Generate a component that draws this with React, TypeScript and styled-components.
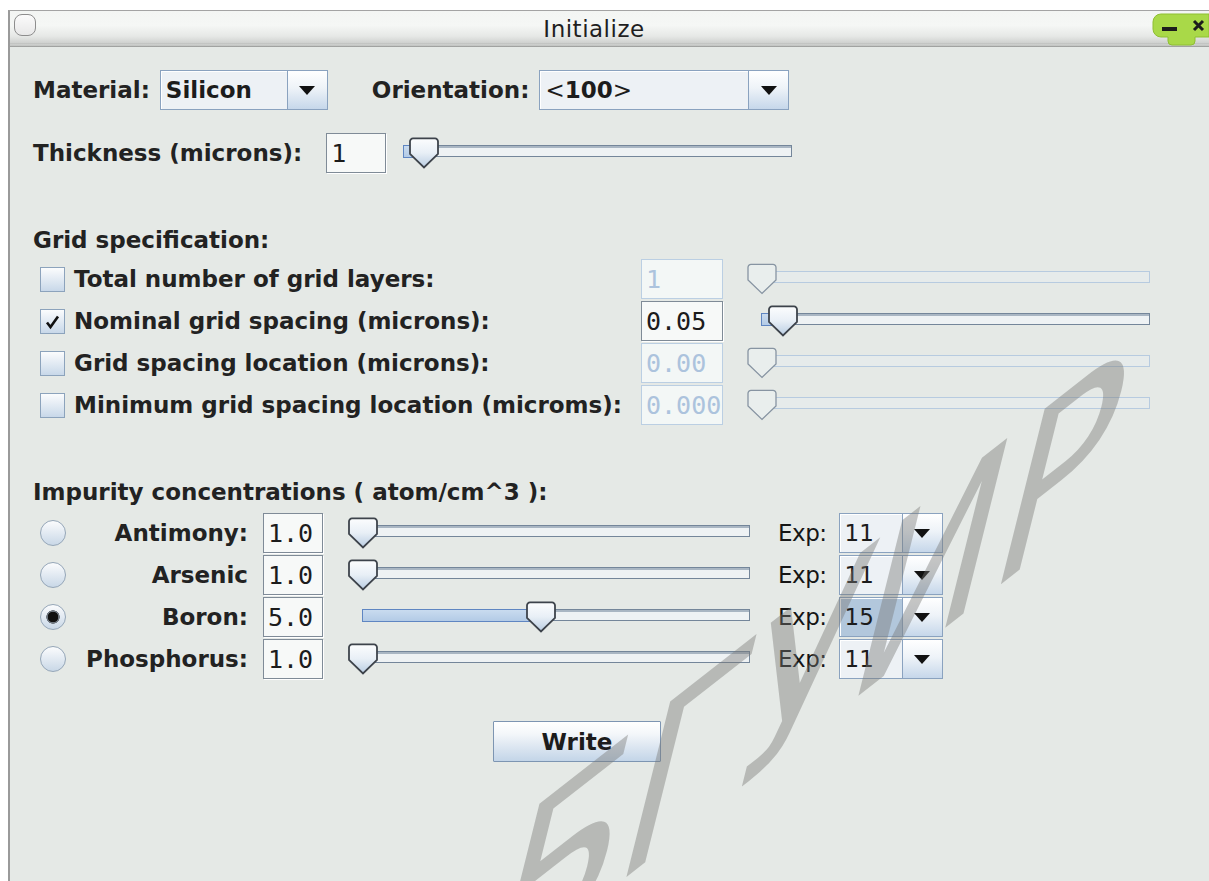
import styled, { createGlobalStyle } from "styled-components";

const GlobalStyle = createGlobalStyle`
  html, body {
    margin: 0;
    padding: 0;
    background: #ffffff;
  }
  body {
    font-family: "DejaVu Sans", "Liberation Sans", sans-serif;
  }
  * {
    box-sizing: border-box;
  }
`;

type Impurity = {
  name: string;
  value: string;
  pos: number;
  exp: string;
  selected?: boolean;
};

const gridRows = [
  { label: "Total number of grid layers:", value: "1", checked: false, pos: 0 },
  { label: "Nominal grid spacing (microns):", value: "0.05", checked: true, pos: 0.054 },
  { label: "Grid spacing location (microns):", value: "0.00", checked: false, pos: 0 },
  { label: "Minimum grid spacing location (microms):", value: "0.000", checked: false, pos: 0 },
];

const impurities: Impurity[] = [
  { name: "Antimony:", value: "1.0", pos: 0, exp: "11" },
  { name: "Arsenic", value: "1.0", pos: 0, exp: "11" },
  { name: "Boron:", value: "5.0", pos: 0.46, exp: "15", selected: true },
  { name: "Phosphorus:", value: "1.0", pos: 0, exp: "11" },
];

const DownArrow = () => (
  <svg width="16" height="9" viewBox="0 0 16 9">
    <path d="M0 0H16L8 9Z" fill="#111" />
  </svg>
);

const ThumbShape = ({ disabled }: { disabled?: boolean }) => (
  <svg width="31" height="32" viewBox="0 0 31 32">
    <defs>
      <linearGradient id="thumbFill" x1="0" y1="0" x2="0" y2="1">
        <stop offset="0" stopColor="#fcfdfe" />
        <stop offset="0.5" stopColor="#e8eff6" />
        <stop offset="1" stopColor="#b9cde2" />
      </linearGradient>
    </defs>
    <path
      d="M4.5 1.5H26.5A3 3 0 0 1 29.5 4.5V17L15.5 30.5L1.5 17V4.5A3 3 0 0 1 4.5 1.5Z"
      fill={disabled ? "#e9eeed" : "url(#thumbFill)"}
      stroke={disabled ? "#8794a2" : "#3d434b"}
      strokeWidth={disabled ? 1.3 : 1.8}
    />
  </svg>
);

const Slider = ({
  width,
  gap,
  pos,
  disabled,
}: {
  width: number;
  gap: number;
  pos: number;
  disabled?: boolean;
}) => (
  <SliderBox $width={width} $gap={gap}>
    <Track $disabled={disabled}>
      {!disabled && pos > 0 && <TrackFill style={{ width: `${pos * 100}%` }} />}
      <Thumb style={{ left: `${pos * 100}%` }}>
        <ThumbShape disabled={disabled} />
      </Thumb>
    </Track>
  </SliderBox>
);

const Combo = ({
  value,
  width,
  bold,
  selected,
}: {
  value: React.ReactNode;
  width: number;
  bold?: boolean;
  selected?: boolean;
}) => (
  <ComboBox $width={width}>
    <ComboValue $bold={bold} $selected={selected}>
      {value}
    </ComboValue>
    <ComboArrow>
      <DownArrow />
    </ComboArrow>
  </ComboBox>
);

const CheckBox = ({ checked }: { checked?: boolean }) => (
  <CheckSquare>
    {checked && (
      <svg width="23" height="23" viewBox="0 0 23 23">
        <path d="M6 12.5L9.5 17L17 6.5" fill="none" stroke="#111" strokeWidth="2.6" />
      </svg>
    )}
  </CheckSquare>
);

const WindowControls = () => (
  <svg width="57" height="34" viewBox="0 0 57 34">
    <path
      d="M9 2H57V25H43V29A4 4 0 0 1 39 33H20A4 4 0 0 1 16 29V25H9A8 8 0 0 1 1 17V10A8 8 0 0 1 9 2Z"
      fill="#a9d948"
      stroke="#8fbf33"
      strokeWidth="1"
    />
    <rect x="10" y="15" width="15" height="4" fill="#1c1c1c" />
    <path d="M42 9L51 18M51 9L42 18" stroke="#1c1c1c" strokeWidth="3" />
  </svg>
);

export default function App() {
  return (
    <>
      <GlobalStyle />
      <Window>
        <TitleBar>
          <CloseDot />
          <Title>Initialize</Title>
          <Controls>
            <WindowControls />
          </Controls>
        </TitleBar>

        <Content>
          <Row>
            <Label>Material:</Label>
            <Spacer $w={10} />
            <Combo value="Silicon" width={168} bold />
            <Spacer $w={44} />
            <Label>Orientation:</Label>
            <Spacer $w={10} />
            <Combo
              value={
                <>
                  <Thin>&lt;</Thin>100<Thin>&gt;</Thin>
                </>
              }
              width={250}
              bold
            />
          </Row>

          <Row $mt={23}>
            <Label>Thickness (microns):</Label>
            <Spacer $w={24} />
            <TextField $width={60}>1</TextField>
            <Slider width={389} gap={17} pos={0.05} />
          </Row>

          <SectionTitle $mt={52}>Grid specification:</SectionTitle>
          <RowList $mt={4}>
            {gridRows.map((r) => (
              <Row key={r.label}>
                <CheckBox checked={r.checked} />
                <OptionLabel>{r.label}</OptionLabel>
                <TextField $width={82} $disabled={!r.checked}>
                  {r.value}
                </TextField>
                <Slider width={389} gap={38} pos={r.pos} disabled={!r.checked} />
              </Row>
            ))}
          </RowList>

          <SectionTitle $mt={52}>Impurity concentrations ( atom/cm^3 ):</SectionTitle>
          <RowList $mt={6}>
            {impurities.map((imp) => (
              <Row key={imp.name}>
                <Radio $on={imp.selected} />
                <ImpurityName>{imp.name}</ImpurityName>
                <TextField $width={60} $ml={15}>
                  {imp.value}
                </TextField>
                <Slider width={388} gap={39} pos={imp.pos} />
                <ExpLabel>Exp:</ExpLabel>
                <Combo value={imp.exp} width={104} selected={imp.selected} />
              </Row>
            ))}
          </RowList>

          <ButtonRow>
            <WriteButton>Write</WriteButton>
          </ButtonRow>
        </Content>

        <Watermark>
          <WatermarkText>а БГУИР</WatermarkText>
        </Watermark>
      </Window>
    </>
  );
}

const Window = styled.div`
  position: relative;
  margin: 10px 0 0 8px;
  height: 871px;
  border-left: 2px solid #9a9a9a;
  border-top: 1px solid #a3a3a3;
  display: flex;
  flex-direction: column;
  overflow: hidden;
`;

const TitleBar = styled.div`
  height: 36px;
  flex-shrink: 0;
  display: flex;
  align-items: flex-start;
  background: linear-gradient(
    #f3f5f3 0%,
    #f5f7f5 40%,
    #e6e8e6 70%,
    #d0d2d0 88%,
    #b9bbb9 92%,
    #dcdedc 94%,
    #8f918f 100%
  );
`;

const CloseDot = styled.div`
  width: 22px;
  height: 22px;
  margin: 3px 0 0 4px;
  border: 1.5px solid #8d8d8d;
  border-radius: 8px;
  background: linear-gradient(#fbfbfb, #e8e8e8);
`;

const Title = styled.div`
  flex: 1;
  text-align: center;
  font-size: 23px;
  line-height: 36px;
  color: #1f1f1f;
  letter-spacing: 0.5px;
`;

const Controls = styled.div`
  width: 57px;
  height: 34px;
  margin-top: 1px;
`;

const Content = styled.div`
  flex: 1;
  background: #e5e9e6;
  padding: 23px 0 0 23px;
  color: #222;
`;

const Row = styled.div<{ $mt?: number }>`
  display: flex;
  align-items: center;
  height: 40px;
  margin-top: ${({ $mt }) => $mt ?? 0}px;
`;

const RowList = styled.div<{ $mt: number }>`
  display: flex;
  flex-direction: column;
  gap: 2px;
  margin-top: ${({ $mt }) => $mt}px;
`;

const Spacer = styled.div<{ $w: number }>`
  width: ${({ $w }) => $w}px;
  flex-shrink: 0;
`;

const Label = styled.span`
  font-weight: bold;
  font-size: 23px;
  color: #222;
  white-space: nowrap;
`;

const SectionTitle = styled.div<{ $mt: number }>`
  margin-top: ${({ $mt }) => $mt}px;
  height: 30px;
  line-height: 30px;
  font-weight: bold;
  font-size: 23px;
  color: #222;
  white-space: nowrap;
`;

const ComboBox = styled.div<{ $width: number }>`
  display: flex;
  width: ${({ $width }) => $width}px;
  height: 40px;
  border: 1.5px solid #8aa2bf;
  flex-shrink: 0;
`;

const ComboValue = styled.div<{ $bold?: boolean; $selected?: boolean }>`
  flex: 1;
  display: flex;
  align-items: center;
  padding-left: 5px;
  font-size: 23px;
  font-weight: ${({ $bold }) => ($bold ? "bold" : "normal")};
  color: #1c1c1c;
  background: ${({ $selected }) => ($selected ? "#b2c7dc" : "#edf1f5")};
  box-shadow: inset 1px 1px 0 #ffffff;
`;

const Thin = styled.span`
  font-weight: normal;
`;

const ComboArrow = styled.div`
  width: 40px;
  display: flex;
  align-items: center;
  justify-content: center;
  border-left: 1.5px solid #8aa2bf;
  background: linear-gradient(#ffffff 0%, #eef3f8 45%, #c6d7ea 100%);
`;

const TextField = styled.div<{ $width: number; $disabled?: boolean; $ml?: number }>`
  width: ${({ $width }) => $width}px;
  height: 40px;
  margin-left: ${({ $ml }) => $ml ?? 0}px;
  flex-shrink: 0;
  display: flex;
  align-items: center;
  padding-left: 4px;
  font-family: "DejaVu Sans Mono", "Liberation Mono", monospace;
  font-size: 25px;
  color: ${({ $disabled }) => ($disabled ? "#acc3dd" : "#1c1c1c")};
  background: ${({ $disabled }) => ($disabled ? "#f3f7f6" : "#f7f9f8")};
  border: 1px solid ${({ $disabled }) => ($disabled ? "#bbcfe3" : "#7f8b97")};
  box-shadow: ${({ $disabled }) => ($disabled ? "none" : "1px 1px 0 #ffffff")};
`;

const SliderBox = styled.div<{ $width: number; $gap: number }>`
  width: ${({ $width }) => $width}px;
  margin-left: ${({ $gap }) => $gap}px;
  height: 40px;
  flex-shrink: 0;
  display: flex;
  align-items: center;
  padding-bottom: 4px;
`;

const Track = styled.div<{ $disabled?: boolean }>`
  position: relative;
  width: 100%;
  height: 12px;
  border: 1.5px solid ${({ $disabled }) => ($disabled ? "#b7cbe0" : "#74869a")};
  background: ${({ $disabled }) =>
    $disabled ? "#e6ebeb" : "linear-gradient(#a9b6c3 0 2px, #eef2f4 2px)"};
`;

const TrackFill = styled.div`
  position: absolute;
  left: -1.5px;
  top: -1.5px;
  bottom: -1.5px;
  border: 1.5px solid #5f86c2;
  background: linear-gradient(#c9dbef, #b3cbe6);
`;

const Thumb = styled.div`
  position: absolute;
  top: 50%;
  width: 31px;
  height: 32px;
  transform: translate(-50%, -44%);
  line-height: 0;
`;

const CheckSquare = styled.div`
  width: 25px;
  height: 25px;
  margin-left: 7px;
  flex-shrink: 0;
  border: 1px solid #8ca3bc;
  background: linear-gradient(#fbfcfd, #c8d8e9);
  display: flex;
  align-items: center;
  justify-content: center;
`;

const OptionLabel = styled.span`
  width: 567px;
  margin-left: 9px;
  flex-shrink: 0;
  font-weight: bold;
  font-size: 23px;
  color: #222;
  white-space: nowrap;
`;

const Radio = styled.div<{ $on?: boolean }>`
  width: 26px;
  height: 26px;
  margin-left: 7px;
  flex-shrink: 0;
  border-radius: 50%;
  border: 1px solid #95a6b8;
  background: ${({ $on }) =>
    $on
      ? "radial-gradient(circle, #111 0 5px, #6f7780 5.5px 6.5px, transparent 7px), linear-gradient(#fbfcfd, #c9d8e7)"
      : "linear-gradient(#fbfcfd, #c9d8e7)"};
`;

const ImpurityName = styled.span`
  width: 182px;
  flex-shrink: 0;
  text-align: right;
  font-weight: bold;
  font-size: 23px;
  color: #222;
  white-space: nowrap;
`;

const ExpLabel = styled.span`
  margin: 0 12px 0 28px;
  font-size: 23px;
  color: #151515;
  letter-spacing: -0.5px;
`;

const ButtonRow = styled.div`
  margin-top: 42px;
  padding-left: 460px;
`;

const WriteButton = styled.button`
  width: 168px;
  height: 41px;
  border: 1.5px solid #7d95b2;
  border-radius: 1px;
  background: linear-gradient(#ffffff 0%, #f4f7fa 30%, #dfe8f2 60%, #c3d5e8 100%);
  font-family: "DejaVu Sans", "Liberation Sans", sans-serif;
  font-weight: bold;
  font-size: 23px;
  color: #1c1c1c;
  padding: 0;
`;

/* diagonal library stamp laid over the dialog */
const Watermark = styled.div`
  position: absolute;
  left: 1078px;
  top: 535px;
  width: 0;
  height: 0;
  transform-origin: 0 0;
  transform: rotate(14deg) skewY(-52deg) scaleX(0.6);
  pointer-events: none;
`;

const WatermarkText = styled.span`
  position: absolute;
  right: 0;
  bottom: 0;
  font-size: 248px;
  line-height: 1;
  white-space: nowrap;
  color: rgba(118, 120, 116, 0.42);
`;
